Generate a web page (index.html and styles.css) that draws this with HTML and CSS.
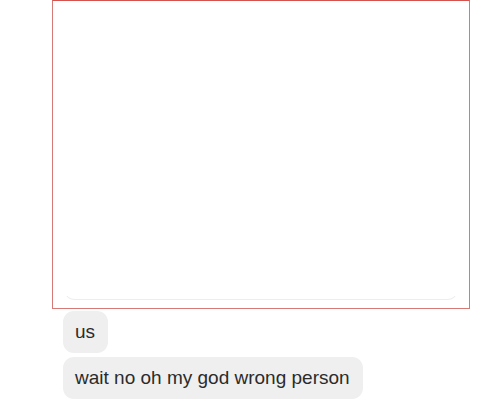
FILE: index.html
```html
<!DOCTYPE html>
<html lang="en">
<head>
  <meta charset="UTF-8" />
  <title>Chat</title>
  <link rel="stylesheet" href="styles.css">
</head>
<body>
  <div class="thread">
    <div class="media-frame">
      <div class="media"></div>
    </div>
    <div class="messages">
      <div class="bubble">us</div>
      <div class="bubble">wait no oh my god wrong person</div>
    </div>
  </div>
</body>
</html>
```

FILE: styles.css
```css
body {
  margin: 0;
  background-color: #ffffff;
  font-family: "Liberation Sans", Arial, sans-serif;
  overflow: hidden;
}
.thread {
  padding-left: 52px;
}
.media-frame {
  width: 396px;
  height: 299px;
  border: 1px solid #d67a76;
  border-top-color: #d4534f;
  padding: 0 10px 8px 10px;
  display: flex;
}
.media {
  flex: 1;
  border-bottom: 1px solid #ededed;
  border-left: 1px solid transparent;
  border-right: 1px solid transparent;
  border-radius: 0 0 12px 12px;
}
.messages {
  display: flex;
  flex-direction: column;
  align-items: flex-start;
  gap: 4px;
  margin-top: 2px;
  padding-left: 11px;
}
.bubble {
  background-color: #efefef;
  color: #2b2b2b;
  font-size: 19px;
  line-height: 22px;
  padding: 10px 13px 10px 12px;
  border-radius: 11px;
}
```
